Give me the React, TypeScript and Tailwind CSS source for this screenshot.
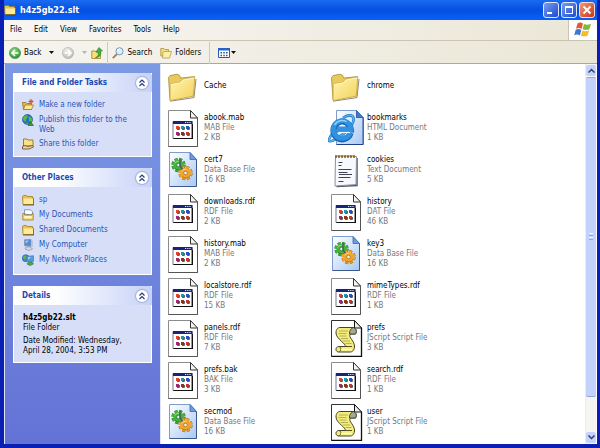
import type { ReactNode } from 'react';

type FileKind = 'folder' | 'app' | 'database' | 'html' | 'text' | 'script';

interface FileItem {
  name: string;
  kind: FileKind;
  type?: string;
  size?: string;
}

const files: FileItem[] = [
  { name: 'Cache', kind: 'folder' },
  { name: 'chrome', kind: 'folder' },
  { name: 'abook.mab', kind: 'app', type: 'MAB File', size: '2 KB' },
  { name: 'bookmarks', kind: 'html', type: 'HTML Document', size: '1 KB' },
  { name: 'cert7', kind: 'database', type: 'Data Base File', size: '16 KB' },
  { name: 'cookies', kind: 'text', type: 'Text Document', size: '5 KB' },
  { name: 'downloads.rdf', kind: 'app', type: 'RDF File', size: '2 KB' },
  { name: 'history', kind: 'app', type: 'DAT File', size: '46 KB' },
  { name: 'history.mab', kind: 'app', type: 'MAB File', size: '2 KB' },
  { name: 'key3', kind: 'database', type: 'Data Base File', size: '16 KB' },
  { name: 'localstore.rdf', kind: 'app', type: 'RDF File', size: '15 KB' },
  { name: 'mimeTypes.rdf', kind: 'app', type: 'RDF File', size: '1 KB' },
  { name: 'panels.rdf', kind: 'app', type: 'RDF File', size: '7 KB' },
  { name: 'prefs', kind: 'script', type: 'JScript Script File', size: '3 KB' },
  { name: 'prefs.bak', kind: 'app', type: 'BAK File', size: '3 KB' },
  { name: 'search.rdf', kind: 'app', type: 'RDF File', size: '1 KB' },
  { name: 'secmod', kind: 'database', type: 'Data Base File', size: '16 KB' },
  { name: 'user', kind: 'script', type: 'JScript Script File', size: '1 KB' },
];

const menus = ['File', 'Edit', 'View', 'Favorites', 'Tools', 'Help'];

/* ---------- large file icons ---------- */

function FolderArt() {
  return (
    <>
      <path d="M5 34.2 29 30.6 31 12" fill="none" stroke="#8f8a78" strokeWidth="1" />
      <path d="M3.5 10.5 5 8.6 12 7.2 14.4 8.2 15.8 11 29.6 9.6 28.5 29 5 33.4Z" fill="#e9c85c" stroke="#a88b34" strokeWidth=".8" />
      <path d="M5.2 17 15 15.2 17.4 12.4 29.8 10 28.2 29.2 5.2 33.5Z" fill="url(#folderFront)" stroke="#c4a544" strokeWidth=".6" />
      <path d="M5.8 17.6 15.4 15.9 17.8 13.1 29 11" fill="none" stroke="#fffbd8" strokeWidth=".8" />
    </>
  );
}

const dots = [
  { x: 11, y: 17, color: '#e0452c' },
  { x: 16, y: 17, color: '#1f9aa8' },
  { x: 21, y: 17, color: '#2b50c8' },
  { x: 11, y: 23, color: '#a02a6a' },
  { x: 16, y: 23, color: '#8a3a1c' },
  { x: 21, y: 23, color: '#c03a34' },
];

function AppArt() {
  return (
    <>
      <path d="M3.5 1.5H25.5L32.5 9V37.5H3.5Z" fill="#fff" stroke="#8b8b8b" />
      <path d="M25.5 1.5V9H32.5Z" fill="#f4f4f4" stroke="#333" />
      <path d="M32.5 9V37.5H3.5" fill="none" stroke="#555" />
      <path d="M8 12.5H27V29.5H8Z" fill="#fff" stroke="#77778a" />
      <path d="M8 12H27.5V15H8Z" fill="#18247c" />
      <path d="M20 13h1.2v1H20zM22.2 13h1.2v1h-1.2zM24.4 13h1.2v1h-1.2z" fill="#dfe6ff" />
      <path d="M27.4 15V29.5H8.5" fill="none" stroke="#111" strokeWidth="1.2" />
      {dots.map((d) => (
        <g key={`${d.x}-${d.y}`}>
          <rect x={d.x} y={d.y} width="3" height="3" fill={d.color} />
          <path d={`M${d.x + 1} ${d.y + 3.4}h2.4v-2.4`} fill="none" stroke="#222" strokeWidth=".8" />
        </g>
      ))}
    </>
  );
}

function Gear({ x, y, color, edge }: { x: number; y: number; color: string; edge: string }) {
  return (
    <g transform={`translate(${x} ${y})`}>
      <circle r="5.7" fill="none" stroke={edge} strokeWidth="3" strokeDasharray="2.9 1.58" />
      <circle r="5.4" fill="none" stroke={color} strokeWidth="2.8" strokeDasharray="2.5 1.74" />
      <circle r="5.2" fill={color} />
      <path d="M-3.6 -1.5A4 4 0 0 1 1 -3.8" fill="none" stroke="#fff" strokeOpacity=".5" />
      <path d="M-3.5 3.6A5.2 5.2 0 0 0 4.6 2.400" fill="none" stroke={edge} strokeWidth=".8" />
      <circle r="1.8" fill="#e8f0fc" stroke={edge} strokeWidth=".7" />
    </g>
  );
}

function DatabaseArt() {
  return (
    <>
      <path d="M4.5 1.5H25L31.5 8.5V35.5H4.5Z" fill="url(#bluePage)" stroke="#7f9ccc" />
      <path d="M31.5 8.5V35.5H4.5" fill="none" stroke="#3a5a8c" />
      <path d="M25 1.5V8.5H31.5Z" fill="#6d9be0" stroke="#3d67ac" strokeWidth=".8" />
      <Gear x={13.5} y={14} color="#46b23e" edge="#26752a" />
      <Gear x={20.5} y={22} color="#f0a52c" edge="#a8680f" />
      <path d="M15 8v7l2.500 3" fill="none" stroke="#4a5a60" strokeWidth="1.400" />
    </>
  );
}

function HtmlArt() {
  return (
    <>
      <path d="M8.5 1.5H28.5L35 8.5V35.5H8.5Z" fill="url(#bluePage)" stroke="#7f9ccc" />
      <path d="M35.2 8.5V35.5H8.5" fill="none" stroke="#1f3f86" />
      <path d="M28.5 1.5V8.5H35Z" fill="#3f7ad0" stroke="#274f9c" strokeWidth=".8" />
      <path d="M4 25C-1.500 33 1 34 8 30 17 25 27 15 25.500 9 24.500 5 19 6 15 9" fill="none" stroke="#1769bb" strokeWidth="2.600" />
      <path d="M4 25C-1.500 33 1 34 8 30 17 25 27 15 25.500 9 24.500 5 19 6 15 9" fill="none" stroke="#58b5f0" strokeWidth="1.500" />
      <path d="M22.600 24A8.800 8.800 0 1 1 22.900 20.500H9" fill="none" stroke="#1663b4" strokeWidth="6" />
      <path d="M22.200 24A8.800 8.800 0 1 1 22.900 20.500H9" fill="none" stroke="#2f93e2" strokeWidth="4.800" />
      <path d="M6.500 16A8.800 8.800 0 0 1 18.500 12.600" fill="none" stroke="#8fd0fa" strokeWidth="1.600" />
      <path d="M10.800 17.200A4 4 0 0 1 17.500 17.200Z" fill="#eef6ff" />
      <path d="M10.500 23.500H22" stroke="#eef6ff" strokeWidth="1.200" />
    </>
  );
}

function TextArt() {
  return (
    <>
      <path d="M8.500 35.500 29 34.500 29 7" fill="none" stroke="#555a66" strokeWidth="1.500" />
      <path d="M7.500 5.500H28.500L28 33.500 7 35Z" fill="#f7f9ff" stroke="#8b90a4" />
      <path d="M8 4v3M11 4v3M14 4v3M17 4v3M20 4v3M23 4v3M26 4v3" stroke="#6d5a2c" strokeWidth="1.400" />
      <path d="M9.500 4v2M12.500 4v2M15.500 4v2M18.500 4v2M21.500 4v2M24.500 4v2" stroke="#e5bd4c" strokeWidth="1" />
      <path d="M10.500 11.500h4M10.500 14.500h3M10.500 18.500h13M10.500 21.500h9M11 23.500h13M10.500 26.500h12M10.500 30.500h5" stroke="#3f4354" />
    </>
  );
}

function ScriptArt() {
  return (
    <>
      <path d="M3.500 1.500H26.500L33.500 9V37.500H3.500Z" fill="#fff" stroke="#333" />
      <path d="M26.500 1.500V9H33.500Z" fill="#eee" stroke="#111" />
      <path d="M33.500 9V37.500H3.500" fill="none" stroke="#111" strokeWidth="1.300" />
      <path d="M12 8.500H25C28 9 29 12 27.500 15H22.500C19.500 18 27 22 26.500 28 26 32 24 33 22 33H10C7 32 7.500 28 10.500 27.500H17C19 25 8 20 8 14 8 10 10 8.500 12 8.500Z" fill="#f3ec7c" stroke="#444422" strokeWidth="1" />
      <path d="M25 8.500C28.500 9.500 29 12.500 27.500 15H21.500C21 12 23 9.500 25 8.500Z" fill="#a9a992" stroke="#333" strokeWidth=".8" />
      <path d="M10.500 27.500C13.500 28 13.500 31 11.500 32.500M17 27.500H24" fill="none" stroke="#55552a" strokeWidth="1" />
      <path d="M11 12h9M10.500 14.500h8M11.500 17h7M13 19.500h7M15 22h7M17.500 24.500h6" stroke="#a5a246" strokeWidth=".8" />
      <path d="M13 30.500h11" stroke="#fffde0" strokeWidth="1.300" />
    </>
  );
}

function FileIcon({ kind }: { kind: FileKind }) {
  return (
    <svg className="h-[38px] w-9 shrink-0" viewBox="0 0 36 38" aria-hidden="true">
      {kind === 'folder' && <FolderArt />}
      {kind === 'app' && <AppArt />}
      {kind === 'database' && <DatabaseArt />}
      {kind === 'html' && <HtmlArt />}
      {kind === 'text' && <TextArt />}
      {kind === 'script' && <ScriptArt />}
    </svg>
  );
}

function SharedGradients() {
  return (
    <svg className="absolute h-0 w-0" aria-hidden="true">
      <defs>
        <linearGradient id="folderFront" x1="0" y1="0" x2="1" y2="1">
          <stop offset="0" stopColor="#fff6b0" />
          <stop offset="1" stopColor="#f3d05c" />
        </linearGradient>
        <linearGradient id="bluePage" x1="0" y1="0" x2="1" y2="1">
          <stop offset="0" stopColor="#ffffff" />
          <stop offset="1" stopColor="#a9c8f4" />
        </linearGradient>
        <radialGradient id="greenBall" cx=".4" cy=".3" r=".8">
          <stop offset="0" stopColor="#8ee07c" />
          <stop offset="1" stopColor="#1f8a25" />
        </radialGradient>
        <radialGradient id="grayBall" cx=".4" cy=".3" r=".8">
          <stop offset="0" stopColor="#f0f0ee" />
          <stop offset="1" stopColor="#b4b4b0" />
        </radialGradient>
      </defs>
    </svg>
  );
}

/* ---------- small icons, all on a 12px grid ---------- */

function SmallIcon({ children }: { children: ReactNode }) {
  return (
    <svg className="h-3 w-3 shrink-0" viewBox="0 0 12 12" aria-hidden="true">
      {children}
    </svg>
  );
}

function SmallFolder() {
  return (
    <SmallIcon>
      <path d="M.5 2.500 1.500 1.500H4.500L5.500 2.500H10.500V4H11.500V10.500H1Z" fill="#e7c251" stroke="#9a7a22" strokeWidth=".8" />
      <path d="M1.500 4.500H11V10H1.500Z" fill="#fdeb97" />
      <path d="M1 11H12V5" fill="none" stroke="#5c4a16" strokeWidth=".8" />
    </SmallIcon>
  );
}

function NewFolderIcon() {
  return (
    <SmallIcon>
      <path d="M.5 3.500H4L5 4.500H9.500V10.500H1.500Z" fill="#e5b94b" stroke="#94701c" strokeWidth=".8" />
      <path d="M1.500 10.500 3 6H11.500L9.500 10.500Z" fill="#fde98e" stroke="#94701c" strokeWidth=".7" />
      <path d="M9 0v5M6.500 2.500h5M7.400 .9l3.200 3.200M10.600 .9 7.400 4.100" stroke="#d8432a" strokeWidth=".9" />
    </SmallIcon>
  );
}

function GlobeIcon() {
  return (
    <SmallIcon>
      <circle cx="5.500" cy="5.500" r="5" fill="#2d6fc4" stroke="#1c4a78" strokeWidth=".6" />
      <path d="M1.500 3C4 0 6 1.500 5.500 3S3.500 5 4 7 2 7 1 5.500ZM7 2.500C9 2 10.500 5 10 7S7 8 7 6 6 4 7 2.500ZM4 8.500l3 1-2 1Z" fill="#4dc23e" />
      <path d="M6 11.500 8.500 7.500 11.500 11.500Z" fill="#2f9b3a" stroke="#14601c" strokeWidth=".6" />
    </SmallIcon>
  );
}

function ShareIcon() {
  return (
    <SmallIcon>
      <path d="M1.500 1H5L6 2H11V8H1.500Z" fill="#fbe184" stroke="#7c6323" strokeWidth=".8" />
      <path d="M.5 8.500C3 7 4 8 6 8.500L10.500 7.500 11.500 9 7 11H.5Z" fill="#f4cfa0" stroke="#5e4425" strokeWidth=".8" />
    </SmallIcon>
  );
}

function DocumentsIcon() {
  return (
    <SmallIcon>
      <path d="M2.500 5V.8H8.500L10.500 2.800V6Z" fill="#fff" stroke="#6a83b0" strokeWidth=".8" />
      <path d="M.8 4.500H2.500V6H10V4.500H11.200V11H.8Z" fill="#f8dd79" stroke="#9a7a22" strokeWidth=".8" />
      <path d="M2.500 7H9.500V9H2.500Z" fill="#fff8cf" />
    </SmallIcon>
  );
}

function ComputerIcon() {
  return (
    <SmallIcon>
      <path d="M2.500 .8 9 .4V7.200L2.500 6.800Z" fill="#4b8be0" stroke="#8c94aa" strokeWidth=".9" />
      <path d="M3.500 1.800 7 1.500 4 4.500Z" fill="#a9d0fb" />
      <path d="M9 .4 10.800 1.500V8L9 7.200Z" fill="#b9bfd0" />
      <path d="M4 8H8.500L10.500 10 7 11.500 3 10Z" fill="#d4d8e4" stroke="#7f879c" strokeWidth=".6" />
    </SmallIcon>
  );
}

function NetworkIcon() {
  return (
    <SmallIcon>
      <circle cx="3.800" cy="4.200" r="3.500" fill="#3a86d4" stroke="#1d558c" strokeWidth=".6" />
      <path d="M1 3.500C2 1 4 1 4 2.500S2.500 4 3 6Z" fill="#54bf45" />
      <path d="M5 2.300 11.500 1.800V7.500L5 7.200Z" fill="#4b9be6" stroke="#707d9c" strokeWidth=".8" />
      <path d="M6 3.200 9 3 6.500 5.500Z" fill="#b6e0fb" />
      <path d="M6.500 8H10L11.500 10 8 11.500 5 10Z" fill="#4bab55" stroke="#2b6a44" strokeWidth=".6" />
    </SmallIcon>
  );
}

function Caret({ muted }: { muted?: boolean }) {
  return (
    <svg className="h-[3px] w-[5px] shrink-0" viewBox="0 0 5 3" aria-hidden="true">
      <path d="M0 0H5L2.500 3Z" fill={muted ? '#b5b3a4' : '#111'} />
    </svg>
  );
}

/* ---------- window parts ---------- */

function TitleBar() {
  return (
    <header className="flex h-5 items-center bg-linear-to-b from-[#1b6bf0] via-[#0450e0] to-[#0a60fb] pr-[2px]">
      <SmallFolder />
      <h1 className="ml-1 flex-1 text-[9px] leading-3 font-bold text-white">h4z5gb22.slt</h1>
      <div className="flex gap-[2px]">
        <button aria-label="Minimize" className="flex h-4 w-4 items-end rounded-[3px] border border-[#dfe8fb] bg-linear-to-br from-[#7a9cf2] to-[#1a48cc] p-[3px]">
          <span className="h-[2px] w-[5px] bg-white" />
        </button>
        <button aria-label="Maximize" className="h-4 w-4 rounded-[3px] border border-[#dfe8fb] bg-linear-to-br from-[#7a9cf2] to-[#1a48cc] p-[3px]">
          <span className="block h-2 w-2 border border-t-2 border-white" />
        </button>
        <button aria-label="Close" className="h-4 w-4 rounded-[3px] border border-[#f5ded6] bg-linear-to-br from-[#f0957a] to-[#c8330e] p-[2px]">
          <svg className="h-[10px] w-[10px]" viewBox="0 0 10 10">
            <path d="M1.500 1.500 8.500 8.500M8.500 1.500 1.500 8.500" stroke="#fff" strokeWidth="1.800" />
          </svg>
        </button>
      </div>
    </header>
  );
}

function MenuBar() {
  return (
    <nav className="flex h-[21px] items-stretch border-b border-[#c9c5b2] bg-linear-to-r from-[#f7f6f3] to-[#ebe7d7]">
      <div className="flex flex-1 items-center gap-3 pl-[6px]">
        {menus.map((menu) => (
          <button key={menu}>{menu}</button>
        ))}
      </div>
      <div className="flex w-[29px] items-center justify-center border-l border-[#c9c5b2] bg-white">
        <svg className="h-4 w-[18px]" viewBox="0 0 18 16" aria-label="Windows">
          <path d="M3.500 1.500C5.500 .2 7.200 .4 9 1.500L7.600 7C5.800 5.800 4 5.800 2 6.800Z" fill="#e8582c" />
          <path d="M10 2C12 3 14.500 3 17 1.800L15.400 7.200C13 8.300 10.600 8.200 8.600 7.300Z" fill="#7cbb3c" />
          <path d="M1.700 7.800C3.800 6.800 5.600 6.900 7.300 8L5.900 13.400C4 12.300 2.200 12.300 .2 13.200Z" fill="#3c78d8" />
          <path d="M8.300 8.400C10.400 9.400 12.600 9.400 15.100 8.300L13.600 13.700C11 14.800 8.800 14.700 6.900 13.800Z" fill="#f6bd2a" />
        </svg>
      </div>
    </nav>
  );
}

function ToolBar() {
  return (
    <div className="flex h-[23px] items-center border-b border-[#aca899] bg-linear-to-r from-[#f5f4ef] to-[#ebe7d7] pt-px pl-[5px]">
      <button className="flex items-center gap-[3px]">
        <SmallIcon>
          <circle cx="6" cy="6" r="5.600" fill="url(#greenBall)" stroke="#2c7f30" strokeWidth=".5" />
          <path d="M9.500 6H3.500M6 3 3 6 6 9" fill="none" stroke="#fff" strokeWidth="1.600" />
        </SmallIcon>
        Back
      </button>
      <button aria-label="Back history" className="ml-2 flex">
        <Caret />
      </button>
      <button aria-label="Forward" className="ml-2">
        <SmallIcon>
          <circle cx="6" cy="6" r="5.600" fill="url(#grayBall)" stroke="#a4a4a0" strokeWidth=".5" />
          <path d="M2.500 6H8.500M6 3 9 6 6 9" fill="none" stroke="#fff" strokeWidth="1.600" />
        </SmallIcon>
      </button>
      <button aria-label="Forward history" className="ml-2 flex">
        <Caret muted />
      </button>
      <button aria-label="Up" className="ml-1">
        <SmallIcon>
          <path d="M.8 4H4L5 5H9.500V11.500H.8Z" fill="#f9e07c" stroke="#a08024" strokeWidth=".8" />
          <path d="M4.500 10.500C7.500 9.500 7.500 7 7 5H5L8 .5 11.500 4H9.500C10.500 8 8.500 10.500 4.500 10.500Z" fill="#42b53c" stroke="#1e7a22" strokeWidth=".6" />
        </SmallIcon>
      </button>
      <span className="ml-1 h-[22px] w-px bg-[#cdcab8]" />
      <button className="ml-1 flex items-center gap-[3px]">
        <SmallIcon>
          <path d="M.8 11.200 5 7" stroke="#a8804c" strokeWidth="1.800" />
          <circle cx="7.500" cy="4.300" r="3.600" fill="#d8effc" stroke="#7c98b8" strokeWidth="1" />
          <path d="M5.500 4C6 2.500 7 2 8 2" fill="none" stroke="#fff" />
        </SmallIcon>
        Search
      </button>
      <button className="ml-2 flex items-center gap-[3px]">
        <SmallIcon>
          <path d="M.8 1.500H4L5 2.500H8.500V9H.8Z" fill="#f6dc74" stroke="#a5862c" strokeWidth=".7" />
          <path d="M3 5.500 4.500 4.500H11.500L9.500 11H2.500Z" fill="#fdf0a8" stroke="#b0903a" strokeWidth=".7" />
        </SmallIcon>
        Folders
      </button>
      <span className="ml-2 h-[22px] w-px bg-[#cdcab8]" />
      <button aria-label="Views" className="ml-2 flex items-center gap-px">
        <SmallIcon>
          <path d="M.5 1.500H11.500V10.500H.5Z" fill="#fff" stroke="#2a57b0" />
          <path d="M0 1H12V3.500H0Z" fill="#2462cc" />
          <path d="M2.500 5h1.500v1.500H2.500zM5.300 5h1.500v1.500H5.300zM8 5h1.500v1.500H8zM2.500 7.700h1.500v1.500H2.500zM5.300 7.700h1.500v1.500H5.300zM8 7.700h1.500v1.500H8z" fill="#33508c" />
        </SmallIcon>
        <Caret />
      </button>
    </div>
  );
}

function Panel({ title, children }: { title: string; children: ReactNode }) {
  return (
    <section className="border border-t-0 border-white bg-[#d6dff7]">
      <div className="-mx-px flex h-[19px] items-center rounded-t-[3px] bg-linear-to-r from-white from-30% to-[#c6d3f7] pt-px pr-1 pl-[9px]">
        <h2 className="flex-1 font-bold text-[#1c48b4]">{title}</h2>
        <button aria-label={`Collapse ${title}`} className="h-3 w-3 rounded-full bg-white shadow-[0_0_1px_1px_#9fb0dc]">
          <svg className="h-3 w-3" viewBox="0 0 12 12">
            <path d="M3.500 5.500 6 3 8.500 5.500M3.500 9 6 6.500 8.500 9" fill="none" stroke="#24397a" strokeWidth="1.200" />
          </svg>
        </button>
      </div>
      {children}
    </section>
  );
}

function PanelLink({ icon, children }: { icon: ReactNode; children: ReactNode }) {
  return (
    <li>
      <a href="#" className="flex items-start gap-[5px] text-[#2a55b8]">
        {icon}
        <span className="pt-px">{children}</span>
      </a>
    </li>
  );
}

function Sidebar() {
  return (
    <aside className="flex w-[157px] shrink-0 flex-col gap-[11px] border-x border-[#dfe6fb] bg-linear-to-b from-[#7c99e4] to-[#6472d6] pt-[9px] pr-2 pl-2">
      <Panel title="File and Folder Tasks">
        <ul className="space-y-[3px] pt-[7px] pb-[6px] pl-2">
          <PanelLink icon={<NewFolderIcon />}>Make a new folder</PanelLink>
          <PanelLink icon={<GlobeIcon />}>
            Publish this folder to the
            <br />
            Web
          </PanelLink>
          <PanelLink icon={<ShareIcon />}>Share this folder</PanelLink>
        </ul>
      </Panel>
      <Panel title="Other Places">
        <ul className="space-y-[3px] pt-[7px] pb-2 pl-2">
          <PanelLink icon={<SmallFolder />}>sp</PanelLink>
          <PanelLink icon={<DocumentsIcon />}>My Documents</PanelLink>
          <PanelLink icon={<SmallFolder />}>Shared Documents</PanelLink>
          <PanelLink icon={<ComputerIcon />}>My Computer</PanelLink>
          <PanelLink icon={<NetworkIcon />}>My Network Places</PanelLink>
        </ul>
      </Panel>
      <Panel title="Details">
        <div className="pt-2 pb-[6px] pl-[9px]">
          <p className="font-bold">h4z5gb22.slt</p>
          <p>File Folder</p>
          <p className="mt-[3px]">
            Date Modified: Wednesday,
            <br />
            April 28, 2004, 3:53 PM
          </p>
        </div>
      </Panel>
    </aside>
  );
}

function FileList() {
  return (
    <ul className="grid flex-1 grid-cols-[repeat(2,163px)] content-start pt-px pl-1">
      {files.map((file) => (
        <li key={file.name} className="flex h-[42px] items-center gap-[3px]">
          <FileIcon kind={file.kind} />
          <div>
            <p>{file.name}</p>
            {file.type && <p className="text-[#77777c]">{file.type}</p>}
            {file.size && <p className="text-[#77777c]">{file.size}</p>}
          </div>
        </li>
      ))}
    </ul>
  );
}

function ScrollBar() {
  return (
    <div className="mr-px flex w-[11px] flex-col border-l border-[#eeede5] bg-[#f6f5f1] py-px">
      <button aria-label="Scroll up" className="flex h-[11px] items-center justify-center rounded-[2px] bg-[#c3d3fd]">
        <svg className="h-[5px] w-[7px]" viewBox="0 0 7 5">
          <path d="M.5 4.500 3.500 1.500 6.500 4.500" fill="none" stroke="#2c3d68" strokeWidth="1.500" />
        </svg>
      </button>
      <div className="flex-1 pt-px">
        <div className="flex h-[90%] flex-col items-center justify-center gap-px rounded-[2px] border-y border-[#8ea6e4] bg-[#c3d2fc]">
          <span className="h-px w-1 bg-[#f0f4ff]" />
          <span className="h-px w-1 bg-[#8fa8e6]" />
          <span className="h-px w-1 bg-[#f0f4ff]" />
          <span className="h-px w-1 bg-[#8fa8e6]" />
        </div>
      </div>
      <button aria-label="Scroll down" className="flex h-[11px] items-center justify-center rounded-[2px] bg-[#c3d3fd]">
        <svg className="h-[5px] w-[7px]" viewBox="0 0 7 5">
          <path d="M.5 .5 3.500 3.500 6.500 .5" fill="none" stroke="#2c3d68" strokeWidth="1.500" />
        </svg>
      </button>
    </div>
  );
}

export default function App() {
  return (
    <div className="flex min-h-screen flex-col border-r-[3px] border-b-4 border-l-4 border-[#0a1fb4] bg-white font-['DejaVu_Sans_Condensed','DejaVu_Sans',sans-serif] text-[8px] leading-[10px] text-black">
      <SharedGradients />
      <TitleBar />
      <MenuBar />
      <ToolBar />
      <main className="flex flex-1 items-stretch">
        <Sidebar />
        <FileList />
        <ScrollBar />
      </main>
    </div>
  );
}
